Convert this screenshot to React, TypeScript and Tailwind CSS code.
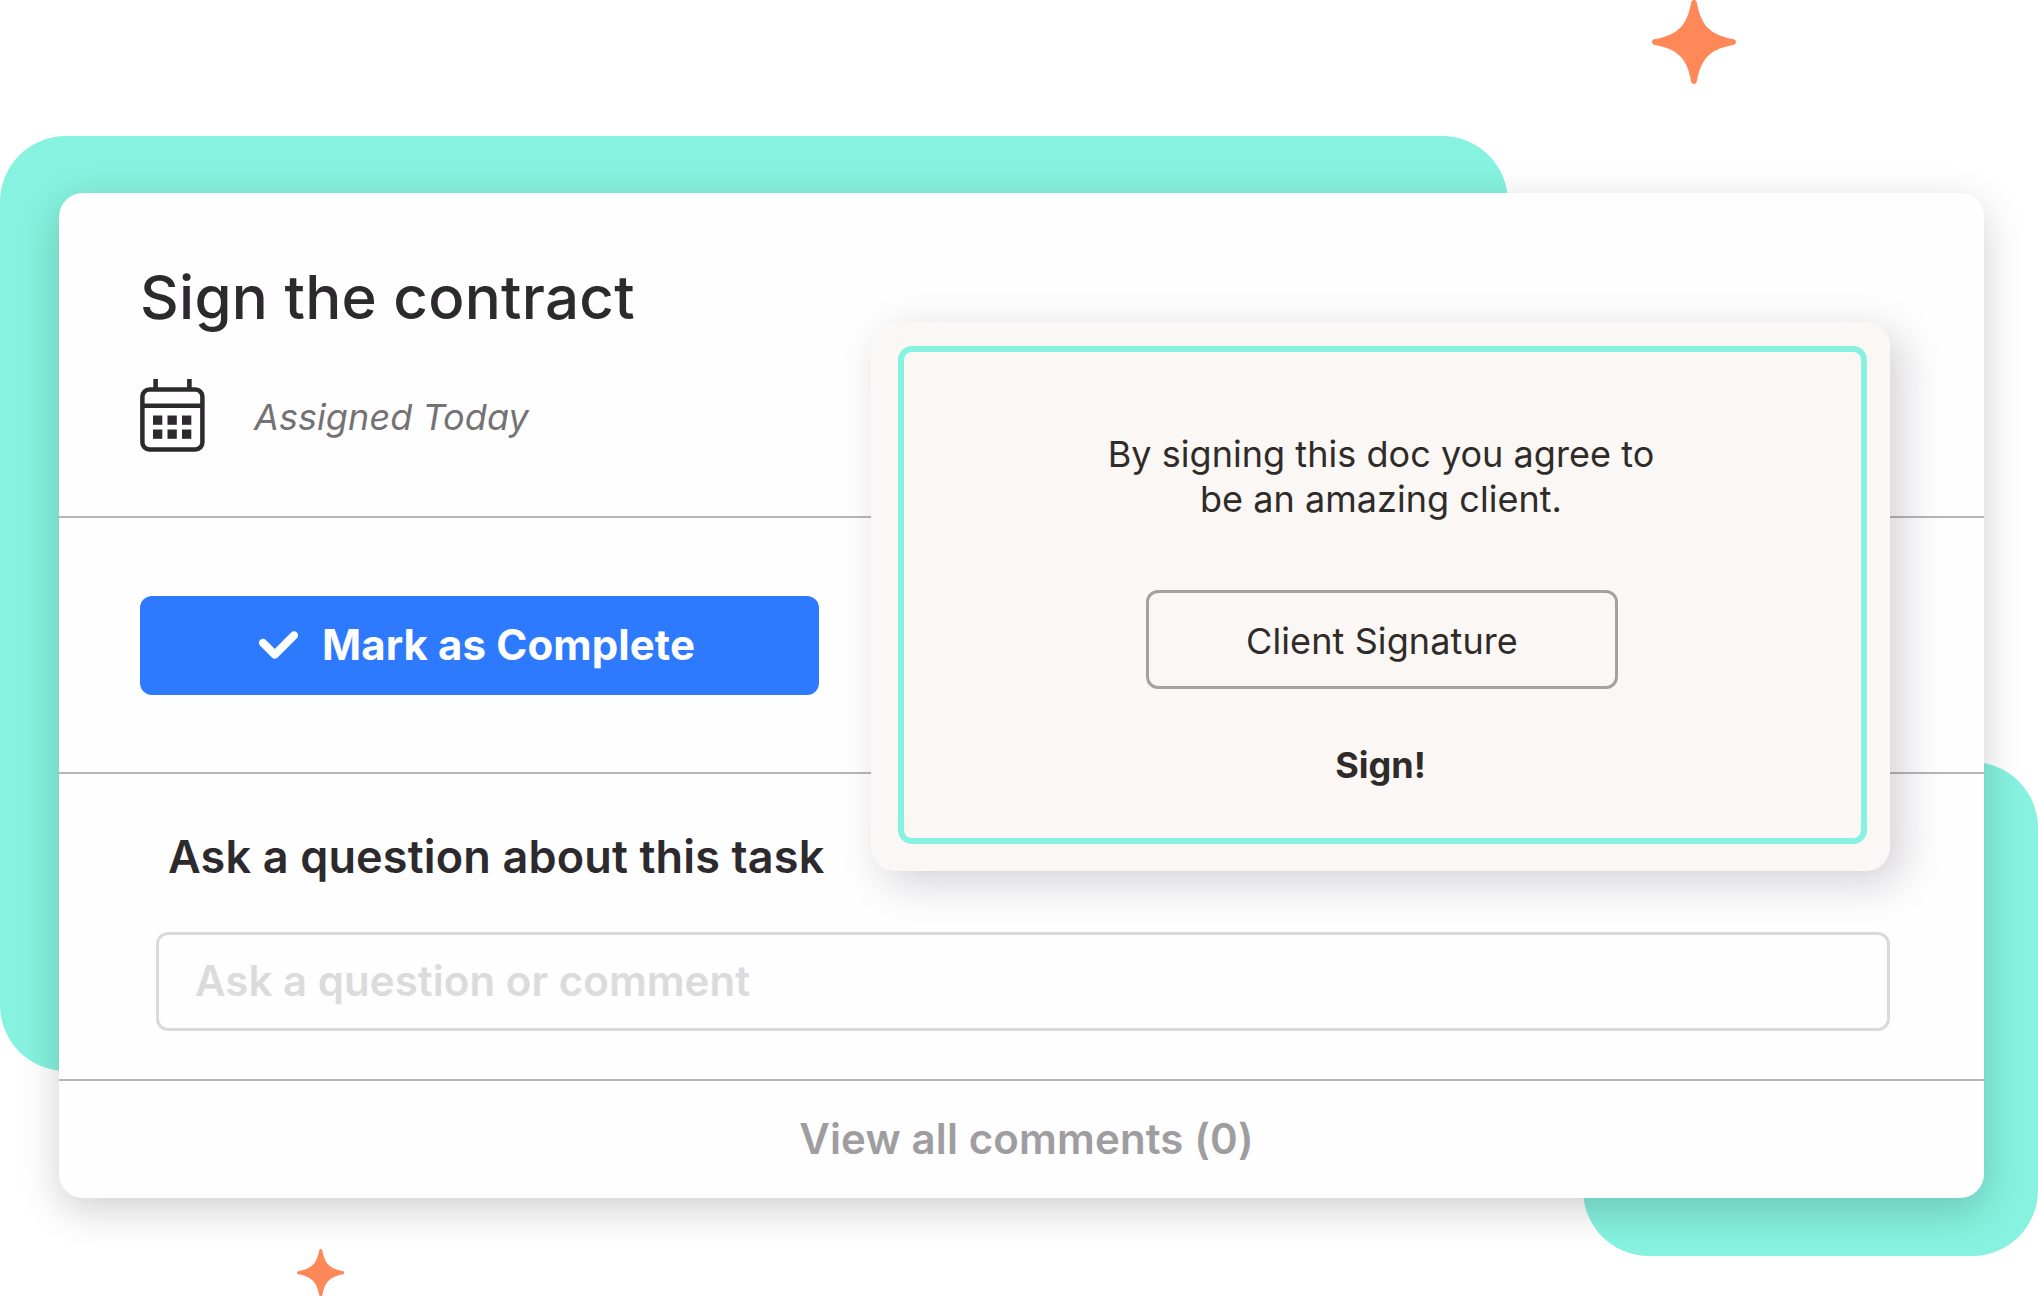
interface SparkleProps {
  className: string;
}

// 四角星裝飾
function Sparkle({ className }: SparkleProps) {
  return (
    <svg viewBox="0 0 84 84" className={className} fill="#ff8859">
      <path d="M39.3 2C40.2 -0.6 43.8 -0.6 44.7 2C47 14 50 22 56 28C62 34 70 37 82 39.3C84.6 40.2 84.6 43.8 82 44.7C70 47 62 50 56 56C50 62 47 70 44.7 82C43.8 84.6 40.2 84.6 39.3 82C37 70 34 62 28 56C22 50 14 47 2 44.7C-0.6 43.8 -0.6 40.2 2 39.3C14 37 22 34 28 28C34 22 37 14 39.3 2Z" />
    </svg>
  );
}

const CALENDAR_COLS = [13, 27.5, 42];
const CALENDAR_ROWS = [36.5, 50.5];

function CalendarIcon() {
  return (
    <svg width="65" height="73" viewBox="0 0 65 73" fill="none" className="shrink-0">
      <rect x="2.4" y="10.5" width="60" height="60" rx="7" stroke="#2d2a2e" strokeWidth="4.5" />
      <path d="M2 26.7H62.5M15.6 0V9M49.4 0V9" stroke="#2d2a2e" strokeWidth="4.6" />
      {CALENDAR_ROWS.map((y) =>
        CALENDAR_COLS.map((x) => (
          <rect key={`${x}-${y}`} x={x} y={y} width="9.3" height="9.3" fill="#2d2a2e" />
        ))
      )}
    </svg>
  );
}

function CheckIcon() {
  return (
    <svg width="39" height="29" viewBox="0 0 39 29" fill="none" className="shrink-0">
      <path
        d="M4 11.9L15.8 23.6L35 4.4"
        stroke="white"
        strokeWidth="8"
        strokeLinecap="round"
        strokeLinejoin="round"
      />
    </svg>
  );
}

function SignatureModal() {
  return (
    <div className="absolute top-[322px] left-[871px] h-[548.5px] w-[1019px] rounded-3xl bg-[#fbf7f4] pt-6 pl-[27px] text-4xl shadow-[12px_12px_42px_rgba(45,30,55,0.2)]">
      <div className="flex h-[498px] w-[969px] flex-col items-center rounded-[14px] border-6 border-[#86f2df] pt-[80px] text-[#2f2b29]">
        <p className="mr-[3px] text-center leading-[45px] tracking-[0.04px]">
          By signing this doc you agree to
          <br />
          be an amazing client.
        </p>
        <div className="mt-[68px] mr-px flex h-[99px] w-[472px] items-center justify-center rounded-xl border-3 border-[#a5a19e] pt-[2px] leading-9 tracking-[0.1px]">
          Client Signature
        </div>
        <button type="button" className="mt-[58px] mr-1 text-4xl leading-9 font-bold">
          Sign!
        </button>
      </div>
    </div>
  );
}

export default function App() {
  return (
    <div className="relative h-[1296px] w-[2038px] overflow-hidden bg-white pt-[193px] pl-[59px] font-['Inter',sans-serif] text-[#2d2a2e]">
      {/* 背景色塊 */}
      <div className="absolute top-[136px] left-0 h-[935px] w-[1508px] rounded-[66px] bg-[#86f2df]" />
      <div className="absolute top-[762px] left-[1583px] h-[494px] w-[455px] rounded-[66px] bg-[#86f2df]" />

      {/* 任務卡片 */}
      <div className="relative flex h-[1005px] w-[1925px] flex-col rounded-3xl bg-[#fefefe] shadow-[0_12px_40px_rgba(0,0,0,0.19)]">
        <div className="h-[323px] pt-[74px] pl-[81px]">
          <h1 className="text-6xl leading-[60px] font-medium tracking-[0.26px]">Sign the contract</h1>
          <div className="mt-[52px] flex gap-[49px]">
            <CalendarIcon />
            <span className="mt-5 text-4xl leading-9 tracking-[0.08px] text-[#747274] italic">Assigned Today</span>
          </div>
        </div>

        <div className="h-[256px] border-t-2 border-[#b7b5b7] pt-[78px] pl-[81px]">
          <button
            type="button"
            className="flex h-[99px] w-[679px] items-center gap-6 rounded-xl bg-[#2e7aff] pb-px pl-[119px] text-[42px] leading-[42px] font-bold tracking-[0.1px] text-white"
          >
            <CheckIcon />
            Mark as Complete
          </button>
        </div>

        <div className="h-[307px] border-t-2 border-[#b7b5b7] pt-[60px] pl-[97px]">
          <h2 className="pl-3 text-[45px] leading-[45px] font-semibold tracking-[0.15px]">
            Ask a question about this task
          </h2>
          <input
            type="text"
            placeholder="Ask a question or comment"
            className="mt-[53px] block h-[99px] w-[1734px] rounded-xl border-3 border-[#dbd9dc] px-9 pb-[2px] text-[42px] font-semibold tracking-[0.05px] outline-none placeholder:text-[#dcdadd] placeholder:opacity-100"
          />
        </div>

        <div className="flex flex-1 items-center justify-center border-t-2 border-[#b7b5b7] pb-[2px] pl-[10px] text-[42px] leading-[42px] font-semibold tracking-[0.13px] text-[#9f9da0]">
          View all comments (0)
        </div>
      </div>

      <SignatureModal />

      <Sparkle className="absolute top-0 left-[1652px] size-[84px]" />
      <Sparkle className="absolute top-[1248.5px] left-[296.5px] size-[47.5px]" />
    </div>
  );
}
